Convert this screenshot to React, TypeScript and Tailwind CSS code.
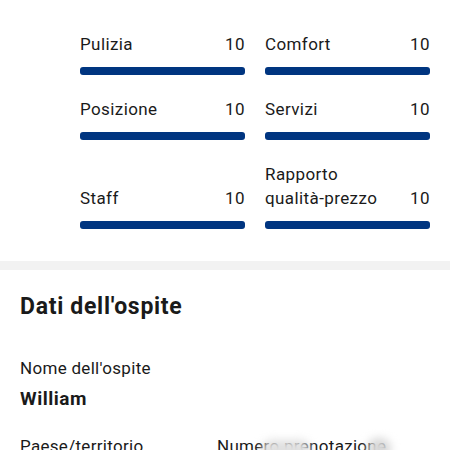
import React from "react";

const rows: { label: string[]; value: string }[][] = [
  [
    { label: ["Pulizia"], value: "10" },
    { label: ["Comfort"], value: "10" },
  ],
  [
    { label: ["Posizione"], value: "10" },
    { label: ["Servizi"], value: "10" },
  ],
  [
    { label: ["Staff"], value: "10" },
    { label: ["Rapporto", "qualità-prezzo"], value: "10" },
  ],
];

function Score({ label, value }: { label: string[]; value: string }) {
  return (
    <div className="flex flex-col">
      <div className="flex items-end justify-between text-[17px] leading-[24px] tracking-[0.4px] text-[#1a1a1a]">
        <div className="flex flex-col">
          {label.map((l) => (
            <span key={l}>{l}</span>
          ))}
        </div>
        <span>{value}</span>
      </div>
      <div className="mt-[11px] h-[8px] rounded-[3px] bg-[#003580]" />
    </div>
  );
}

export default function App() {
  return (
    <div
      className="w-[450px] h-[450px] overflow-hidden bg-white"
      style={{ fontFamily: "Roboto, 'Noto Sans', sans-serif" }}
    >
      <div className="pt-[32px] pl-[80px] pr-[20px] pb-[32px] flex flex-col gap-[22px]">
        {rows.map((r, i) => (
          <div key={i} className="grid grid-cols-2 gap-x-[20px] items-end">
            {r.map((s) => (
              <Score key={s.value + s.label.join()} label={s.label} value={s.value} />
            ))}
          </div>
        ))}
      </div>
      <div className="h-[9px] bg-[#f2f2f2]" />
      <div className="px-[20px] pt-[23px]">
        <h2 className="text-[23px] leading-[28px] tracking-[0.7px] font-bold text-[#1a1a1a]">Dati dell'ospite</h2>
        <div className="mt-[35px] text-[17px] leading-[24px] tracking-[0.3px] text-[#1a1a1a]">Nome dell'ospite</div>
        <div className="mt-[7px] text-[19px] leading-[24px] tracking-[0.5px] font-bold text-[#1a1a1a]">William</div>
        <div className="mt-[23px] grid grid-cols-[197px_1fr] text-[17px] leading-[24px] tracking-[0.3px] text-[#1a1a1a]">
          <span>Paese/territorio</span>
          <span className="relative">
            Numero prenotazione
            <span className="absolute left-[44px] top-[6px] h-[22px] w-[50px] rounded-full bg-[#e0e0e0] blur-[4px]" />
            <span className="absolute left-[150px] top-[4px] h-[22px] w-[24px] rounded-full bg-[#d8d8d8] blur-[4px]" />
          </span>
        </div>
      </div>
    </div>
  );
}
